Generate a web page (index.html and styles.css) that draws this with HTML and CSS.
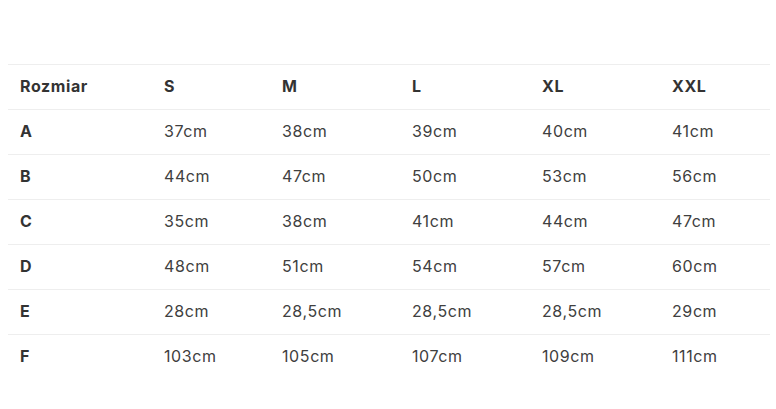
FILE: index.html
```html
<!DOCTYPE html>
<html lang="pl">
<head>
<meta charset="utf-8">
<link rel="stylesheet" href="styles.css">
</head>
<body>
<div class="wrap">
<table class="sizes">
  <thead>
    <tr><th class="c1">Rozmiar</th><th class="c2">S</th><th class="c3">M</th><th class="c4">L</th><th class="c5">XL</th><th class="c6">XXL</th></tr>
  </thead>
  <tbody>
    <tr><th>A</th><td>37cm</td><td>38cm</td><td>39cm</td><td>40cm</td><td>41cm</td></tr>
    <tr><th>B</th><td>44cm</td><td>47cm</td><td>50cm</td><td>53cm</td><td>56cm</td></tr>
    <tr><th>C</th><td>35cm</td><td>38cm</td><td>41cm</td><td>44cm</td><td>47cm</td></tr>
    <tr><th>D</th><td>48cm</td><td>51cm</td><td>54cm</td><td>57cm</td><td>60cm</td></tr>
    <tr><th>E</th><td>28cm</td><td>28,5cm</td><td>28,5cm</td><td>28,5cm</td><td>29cm</td></tr>
    <tr class="last"><th>F</th><td>103cm</td><td>105cm</td><td>107cm</td><td>109cm</td><td>111cm</td></tr>
  </tbody>
</table>
</div>
</body>
</html>
```

FILE: styles.css
```css
html, body {
  margin: 0;
  background: #ffffff;
}
.wrap {
  padding: 64px 6px 0 8px;
}
.sizes {
  width: 762px;
  border-collapse: collapse;
  table-layout: fixed;
  font-family: "Inter", "Liberation Sans", sans-serif;
  font-size: 16px;
  color: #3a3a3a;
}
.sizes th, .sizes td {
  height: 45px;
  padding: 0 0 2px 12px;
  text-align: left;
  vertical-align: middle;
  border-top: 1px solid #eeeeee;
  box-sizing: border-box;
}
.sizes th {
  font-weight: 700;
  font-size: 16px;
  letter-spacing: 0.6px;
  color: #333333;
}
.sizes td {
  font-weight: 400;
  letter-spacing: 0.6px;
  color: #404040;
}
.c1 { width: 144px; }
.c2 { width: 118px; }
.c3 { width: 130px; }
.c4 { width: 130px; }
.c5 { width: 130px; }
.c6 { width: 110px; }
```
